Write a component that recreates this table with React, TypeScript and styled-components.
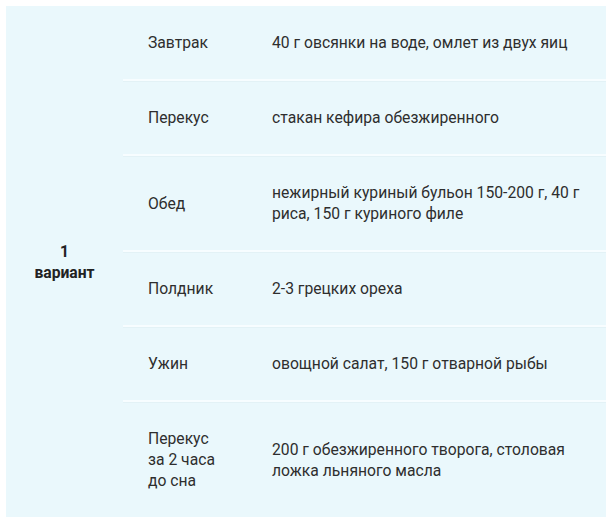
import React from "react";
import styled, { createGlobalStyle } from "styled-components";

const GlobalStyle = createGlobalStyle`
  html, body {
    margin: 0;
    padding: 0;
    background: #ffffff;
  }
  body {
    font-family: Roboto, "Noto Sans", "Liberation Sans", sans-serif;
    color: #2e2e2e;
  }
`;

const Page = styled.div`
  padding: 6px 6px 0 6px;
`;

const Table = styled.table`
  width: 600px;
  border-collapse: collapse;
  table-layout: fixed;
  background: #eaf8fc;
  font-size: 15.7px;
  line-height: 21px;
`;

const VariantCell = styled.td`
  width: 117px;
  padding: 0;
  text-align: center;
  vertical-align: middle;
  font-weight: 700;
  color: #222;
`;

const Cell = styled.td<{ $first?: boolean }>`
  padding: 26px 25px 26px 25px;
  vertical-align: middle;
  border-top: ${(p) => (p.$first ? "none" : "2px solid #f7fdff")};
  box-shadow: ${(p) => (p.$first ? "none" : "inset 0 1px 0 #e3f2f6")};
`;

const MealCell = styled(Cell)`
  width: 74px;
`;

const rows: { meal: string; food: string }[] = [
  { meal: "Завтрак", food: "40 г овсянки на воде, омлет из двух яиц" },
  { meal: "Перекус", food: "стакан кефира обезжиренного" },
  { meal: "Обед", food: "нежирный куриный бульон 150-200 г, 40 г риса, 150 г куриного филе" },
  { meal: "Полдник", food: "2-3 грецких ореха" },
  { meal: "Ужин", food: "овощной салат, 150 г отварной рыбы" },
  {
    meal: "Перекус за 2 часа до сна",
    food: "200 г обезжиренного творога, столовая ложка льняного масла",
  },
];

export default function App() {
  return (
    <Page>
      <GlobalStyle />
      <Table>
        <colgroup>
          <col style={{ width: 117 }} />
          <col style={{ width: 124 }} />
          <col />
        </colgroup>
        <tbody>
          {rows.map((r, i) => (
            <tr key={i}>
              {i === 0 && (
                <VariantCell rowSpan={rows.length}>
                  1<br />
                  вариант
                </VariantCell>
              )}
              <MealCell $first={i === 0}>{r.meal}</MealCell>
              <Cell $first={i === 0}>{r.food}</Cell>
            </tr>
          ))}
        </tbody>
      </Table>
    </Page>
  );
}
